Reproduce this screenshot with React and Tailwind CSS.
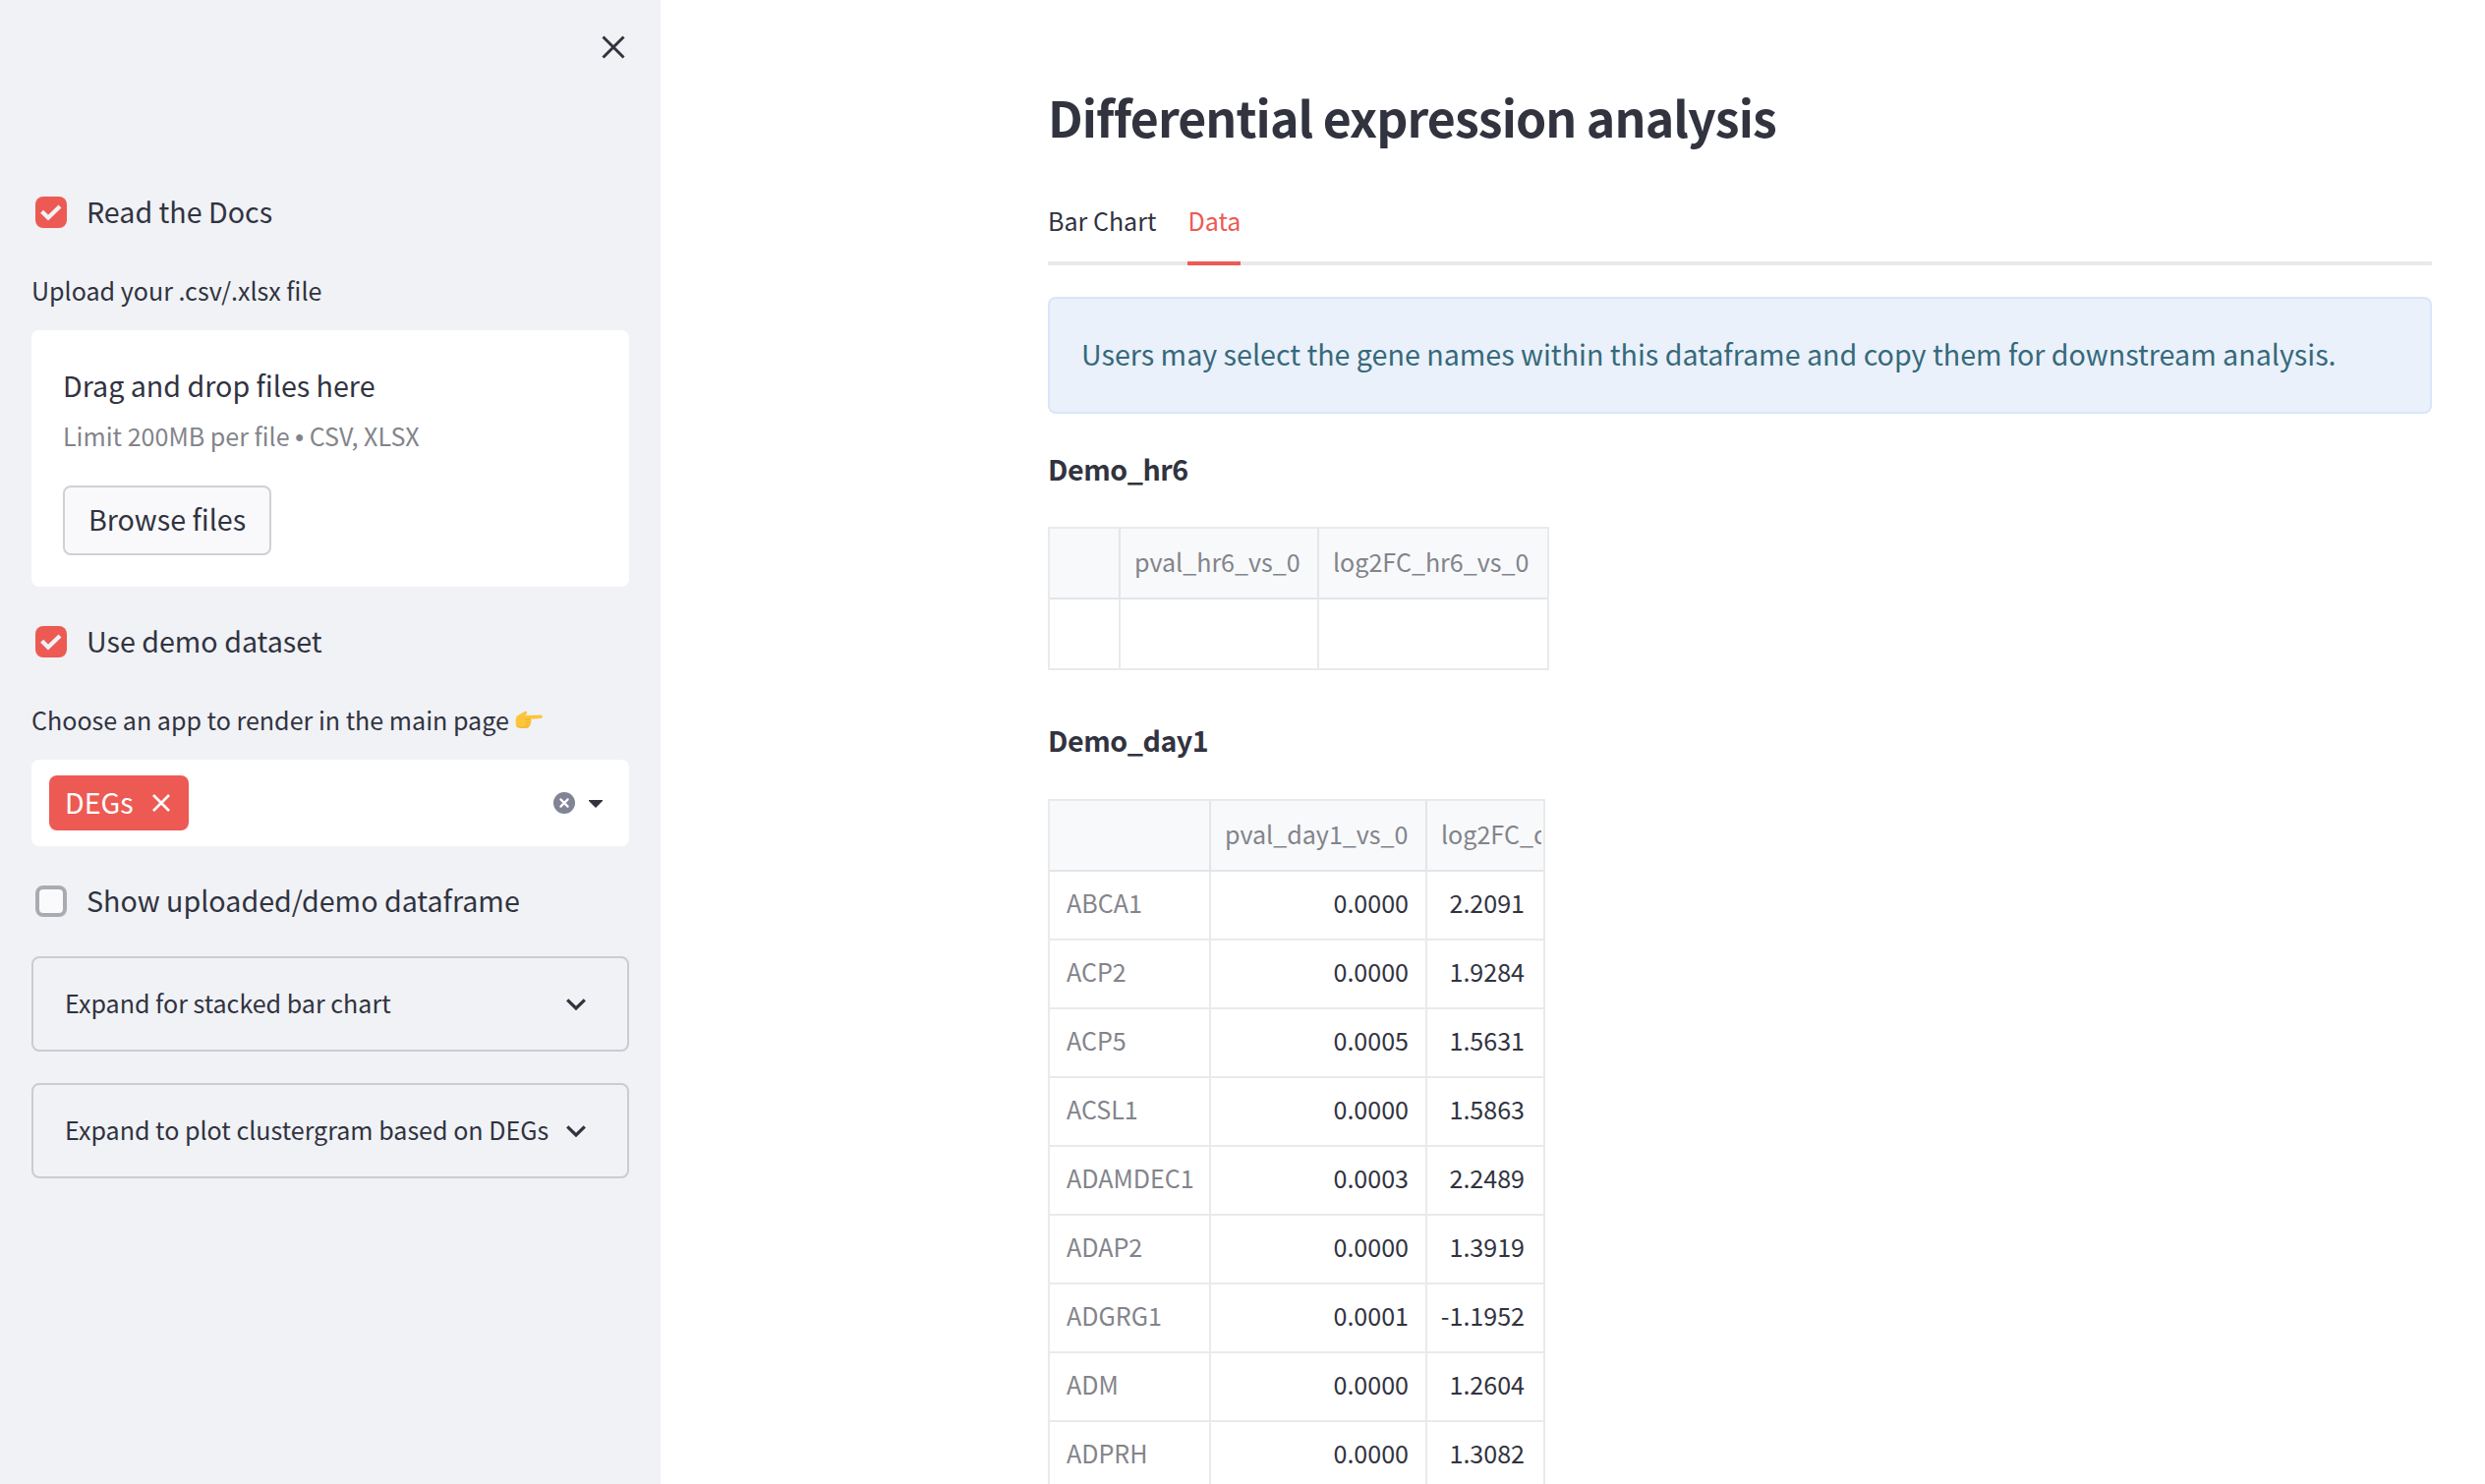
const RED = 'bg-[#ed5a53]'

const geneRows = [
  ['ABCA1', '0.0000', '2.2091'],
  ['ACP2', '0.0000', '1.9284'],
  ['ACP5', '0.0005', '1.5631'],
  ['ACSL1', '0.0000', '1.5863'],
  ['ADAMDEC1', '0.0003', '2.2489'],
  ['ADAP2', '0.0000', '1.3919'],
  ['ADGRG1', '0.0001', '-1.1952'],
  ['ADM', '0.0000', '1.2604'],
  ['ADPRH', '0.0000', '1.3082'],
]

function Checkbox({ label, checked }) {
  return (
    <label className="flex h-8 items-center pl-1">
      {checked ? (
        <span className={`flex size-8 items-center justify-center rounded-lg ${RED}`}>
          <svg viewBox="0 0 32 32" className="size-8" fill="none" stroke="#f0f2f6" strokeWidth="4.2">
            <path d="M6.6 15.2 L13 21.6 L25 10" />
          </svg>
        </span>
      ) : (
        <span className="size-8 rounded-lg border-4 border-[#a9abb0] bg-[#fafafc]" />
      )}
      <span className="ml-5 pb-[3px] whitespace-nowrap text-[28.65px] leading-8">{label}</span>
    </label>
  )
}

function Expander({ label }) {
  return (
    <div className="flex h-[97px] items-center justify-between rounded-lg border-2 border-[#cbccd1] pr-[42px] pl-8">
      <span className="pb-[3px] whitespace-nowrap text-[25.07px] leading-10">{label}</span>
      <svg viewBox="0 0 20 12" className="mt-px h-3 w-5 shrink-0" fill="none" stroke="#31333f" strokeWidth="3.2">
        <path d="M1.2 1.3 L10 10 L18.8 1.3" />
      </svg>
    </div>
  )
}

function PointingHand() {
  return (
    <svg viewBox="0 0 28 19" className="h-[19px] w-7">
      <path
        d="M1 8 C1.5 4.5 6 3.5 9.5 1.2 C11.5 0 12.8 1.5 11.7 3.4 L10.6 5 L26 4.6 C28.4 4.8 28.4 7.8 26 8 L16 8.8 C17 10.2 16.8 11.6 15.7 12.2 C16.4 13.6 15.9 14.8 14.7 15.3 C14.8 17 13.8 17.6 12.3 17.7 C8 18.3 4 18.2 2 16.8 C.3 15 .4 11 1 8Z"
        fill="#fcc53a"
      />
      <path d="M10.2 9 H16 M10.6 12.2 H15.6 M10.4 15.3 H14.6" stroke="#f0ab2a" strokeWidth="0.9" fill="none" />
      <path d="M1.6 16 C4 17.6 9 17.6 13 17" stroke="#f0ab2a" strokeWidth="0.8" fill="none" />
    </svg>
  )
}

function Sidebar() {
  return (
    <aside className="flex w-[672px] shrink-0 flex-col bg-[#f0f2f6] px-8 pt-9">
      <div className="flex h-6 justify-end pr-1">
        <svg viewBox="0 0 24 24" className="size-6" fill="none" stroke="#31333f" strokeWidth="3">
          <path d="M1.5 1.5 L22.5 22.5 M22.5 1.5 L1.5 22.5" />
        </svg>
      </div>
      <div className="mt-[140px]">
        <Checkbox label="Read the Docs" checked />
      </div>
      <div className="mt-[43px] text-[25.07px] leading-10">Upload your .csv/.xlsx file</div>
      <div className="mt-[21px] h-[261px] w-[608px] rounded-lg bg-white px-8 pt-8">
        <div className="text-[28.65px] leading-[48px]">Drag and drop files here</div>
        <div className="mt-[7px] h-10 text-[25.07px] leading-10 text-[#83848b]">
          Limit 200MB per file <span className="font-['Liberation_Sans',sans-serif]">•</span> CSV, XLSX
        </div>
        <button className="mt-[31px] flex h-[71px] w-[212px] items-center justify-center rounded-lg border-2 border-[#d0d1d5] bg-[#f9f9fb] pb-[3px] text-[28.65px]">
          Browse files
        </button>
      </div>
      <div className="mt-10">
        <Checkbox label="Use demo dataset" checked />
      </div>
      <div className="mt-[43px] flex h-10 items-center gap-1.5 text-[25.07px] leading-10">
        Choose an app to render in the main page
        <PointingHand />
      </div>
      <div className="mt-[21px] flex h-22 items-center rounded-lg bg-white pr-[27px] pl-[18px]">
        <span className={`flex h-14 w-[142px] items-center rounded-lg pl-4 text-[28.65px] text-white ${RED}`}>
          <span className="pb-px">DEGs</span>
          <svg viewBox="0 0 18 18" className="ml-[19px] size-[18px]" fill="none" stroke="white" strokeWidth="2.6">
            <path d="M1 1 L17 17 M17 1 L1 17" />
          </svg>
        </span>
        <svg viewBox="0 0 22 22" className="ml-auto size-[22px]">
          <circle cx="11" cy="11" r="11" fill="#808495" />
          <path d="M7.4 7.4 L14.6 14.6 M14.6 7.4 L7.4 14.6" stroke="white" strokeWidth="2.2" strokeLinecap="round" />
        </svg>
        <svg viewBox="0 0 14 8" className="mt-0.5 ml-3.5 h-2 w-3.5" fill="#31333f">
          <path d="M0 0 H14 V1 L7 8 L0 1Z" />
        </svg>
      </div>
      <div className="mt-10 mb-10">
        <Checkbox label="Show uploaded/demo dataframe" />
      </div>
      <div className="flex flex-col gap-8">
        <Expander label="Expand for stacked bar chart" />
        <Expander label="Expand to plot clustergram based on DEGs" />
      </div>
    </aside>
  )
}

function EmptyTable() {
  return (
    <div className="mt-[23px] grid h-[146px] w-[510px] grid-cols-[72px_202px_1fr] grid-rows-[72px_1fr] border-2 border-[#e9eaeb] text-[25.07px] text-[#83848b]">
      <div className="border-r-2 border-b-2 border-[#e4e5e9] bg-[#f8f9fb]" />
      <div className="flex items-center border-r-2 border-b-2 border-[#e4e5e9] bg-[#f8f9fb] pb-0.5 pl-[14px]">
        pval_hr6_vs_0
      </div>
      <div className="flex items-center border-b-2 border-[#e4e5e9] bg-[#f8f9fb] pb-0.5 pl-[14px]">log2FC_hr6_vs_0</div>
      <div className="border-r-2 border-[#e9eaeb]" />
      <div className="border-r-2 border-[#e9eaeb]" />
      <div />
    </div>
  )
}

function GeneTable() {
  return (
    <div className="mt-[23px] w-[506px] border-2 border-[#e9eaeb] text-[25.07px]">
      <div className="grid h-[72px] grid-cols-[164px_220px_118px] border-b-2 border-[#e4e5e9] bg-[#f8f9fb] text-[#83848b]">
        <div className="border-r-2 border-[#e4e5e9]" />
        <div className="flex items-center border-r-2 border-[#e4e5e9] pb-0.5 pl-[14px]">pval_day1_vs_0</div>
        <div className="mr-[2px] flex items-center overflow-hidden pb-0.5 pl-[14px] whitespace-nowrap">log2FC_day1_vs_0</div>
      </div>
      {geneRows.map(([gene, pval, fold]) => (
        <div key={gene} className="grid h-[70px] grid-cols-[164px_220px_118px] border-b-2 border-[#e9eaeb] text-[#31333f]">
          <div className="flex items-center border-r-2 border-[#e9eaeb] pb-[5px] pl-[17px] text-[#83848b]">{gene}</div>
          <div className="flex items-center justify-end border-r-2 border-[#e9eaeb] pr-[17px] pb-[5px]">{pval}</div>
          <div className="flex items-center justify-end pr-[19px] pb-[5px]">{fold}</div>
        </div>
      ))}
    </div>
  )
}

export default function App() {
  return (
    <div className="flex h-[1510px] w-[2528px] overflow-hidden bg-white font-['Noto_Sans_CJK_SC',sans-serif] text-[#31333f]">
      <Sidebar />
      <main className="ml-[394px] w-[1408px] pt-20">
        <h1 className="h-20 text-[50px] leading-[76px] font-bold tracking-[-0.92px] whitespace-nowrap">
          Differential expression analysis
        </h1>
        <nav className="mt-[26px] flex h-[84px] gap-8 border-b-4 border-[#e9e9ea] text-[25.07px] leading-[77px]">
          <span>Bar Chart</span>
          <span className="h-[84px] border-b-4 border-[#ed5a53] text-[#ed5a53]">Data</span>
        </nav>
        <div className="mt-8 flex h-[119px] items-center rounded-lg border-2 border-[#d9e6f8] bg-[#eaf1fb] pb-0.5 pl-8 text-[28.65px] whitespace-nowrap text-[#36697a]">
          Users may select the gene names within this dataframe and copy them for downstream analysis.
        </div>
        <h2 className="mt-[34px] h-[58px] text-[28.6px] leading-[44px] font-bold tracking-[-0.45px]">Demo_hr6</h2>
        <EmptyTable />
        <h2 className="mt-[49px] h-[59px] text-[28.6px] leading-[44px] font-bold tracking-[-0.45px]">Demo_day1</h2>
        <GeneTable />
      </main>
    </div>
  )
}
